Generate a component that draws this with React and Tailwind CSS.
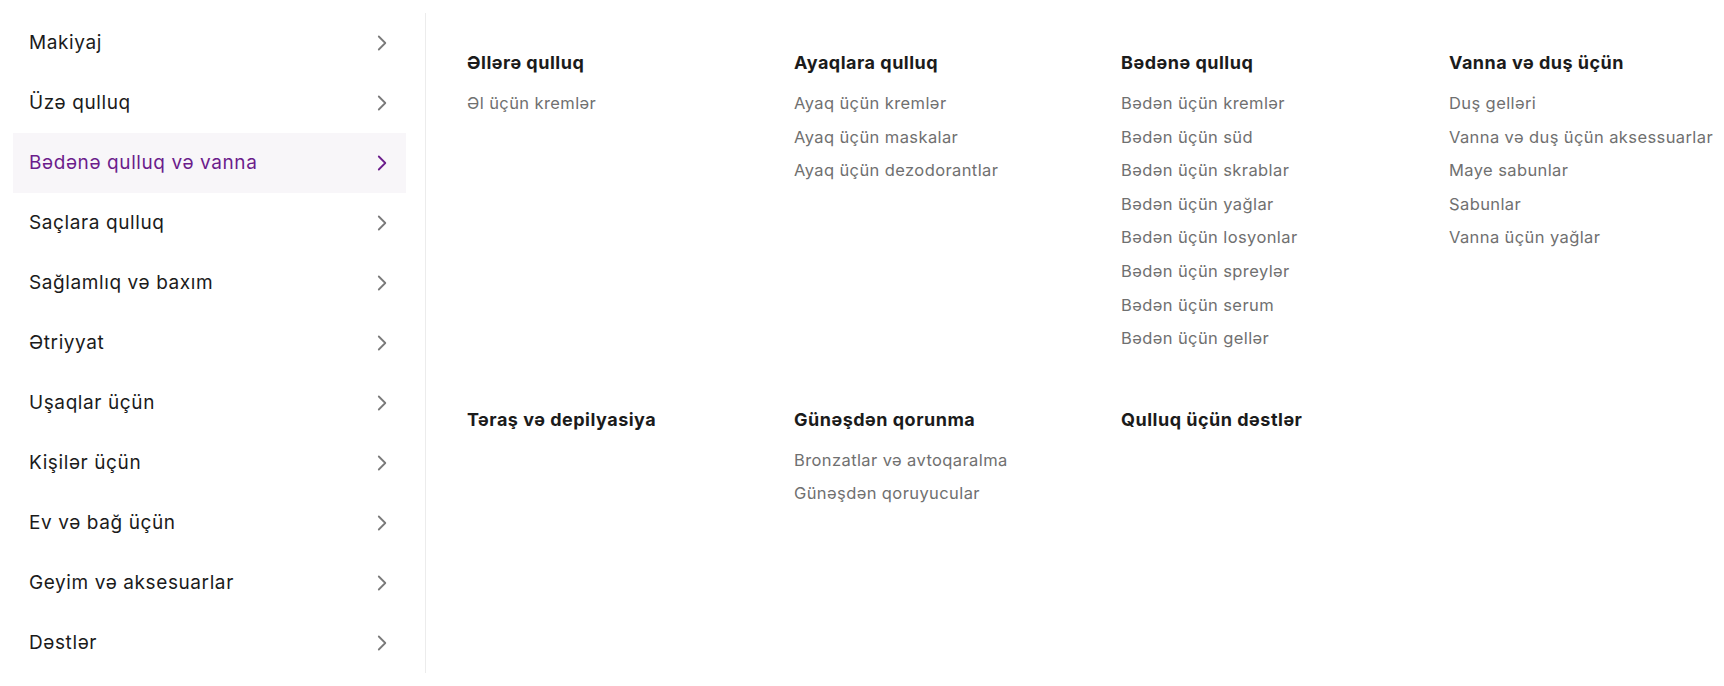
const categories = [
  'Makiyaj',
  'Üzə qulluq',
  'Bədənə qulluq və vanna',
  'Saçlara qulluq',
  'Sağlamlıq və baxım',
  'Ətriyyat',
  'Uşaqlar üçün',
  'Kişilər üçün',
  'Ev və bağ üçün',
  'Geyim və aksesuarlar',
  'Dəstlər',
]

const groups = [
  [
    { title: 'Əllərə qulluq', items: ['Əl üçün kremlər'] },
    { title: 'Ayaqlara qulluq', items: ['Ayaq üçün kremlər', 'Ayaq üçün maskalar', 'Ayaq üçün dezodorantlar'] },
    {
      title: 'Bədənə qulluq',
      items: [
        'Bədən üçün kremlər',
        'Bədən üçün süd',
        'Bədən üçün skrablar',
        'Bədən üçün yağlar',
        'Bədən üçün losyonlar',
        'Bədən üçün spreylər',
        'Bədən üçün serum',
        'Bədən üçün gellər',
      ],
    },
    {
      title: 'Vanna və duş üçün',
      items: ['Duş gelləri', 'Vanna və duş üçün aksessuarlar', 'Maye sabunlar', 'Sabunlar', 'Vanna üçün yağlar'],
    },
  ],
  [
    { title: 'Təraş və depilyasiya', items: [] },
    { title: 'Günəşdən qorunma', items: ['Bronzatlar və avtoqaralma', 'Günəşdən qoruyucular'] },
    { title: 'Qulluq üçün dəstlər', items: [] },
  ],
]

function Chevron({ active }) {
  return (
    <svg width="10" height="16" viewBox="0 0 10 16" fill="none" className={active ? 'text-[#6c1d8c]' : 'text-[#7a7a7a]'}>
      <polyline points="1.8,1.5 8.3,8 1.8,14.5" stroke="currentColor" strokeWidth="1.8" strokeLinecap="round" strokeLinejoin="round" />
    </svg>
  )
}

export default function App() {
  const active = 'Bədənə qulluq və vanna'

  return (
    <div className="w-[1724px] h-[686px] bg-white flex pt-[13px] font-['Inter',sans-serif]">
      <nav className="w-[426px] h-[660px] pl-[13px] pr-[19px] border-r border-[#ececec] shrink-0">
        {categories.map(c => {
          const isActive = c === active
          return (
            <div
              key={c}
              className={`h-[60px] flex items-center justify-between pl-4 pr-[19px] ${isActive ? 'bg-[#f8f6f9]' : ''}`}
            >
              <span className={`text-[19px] tracking-[0.6px] ${isActive ? 'text-[#6c1d8c]' : 'text-[#1b1b1b]'}`}>{c}</span>
              <Chevron active={isActive} />
            </div>
          )
        })}
      </nav>

      <div className="pl-[41px] pt-[38px] flex flex-col gap-[52px]">
        {groups.map((row, i) => (
          <div key={i} className="grid grid-cols-[327px_327px_328px_276px]">
            {row.map(g => (
              <div key={g.title}>
                <h3 className="text-[18px] leading-6 font-bold tracking-[0.5px] text-[#1b1b1b] mb-3">{g.title}</h3>
                {g.items.map(it => (
                  <div key={it} className="text-[16.5px] leading-[33.6px] tracking-[0.4px] text-[#707070] whitespace-nowrap">
                    {it}
                  </div>
                ))}
              </div>
            ))}
          </div>
        ))}
      </div>
    </div>
  )
}
